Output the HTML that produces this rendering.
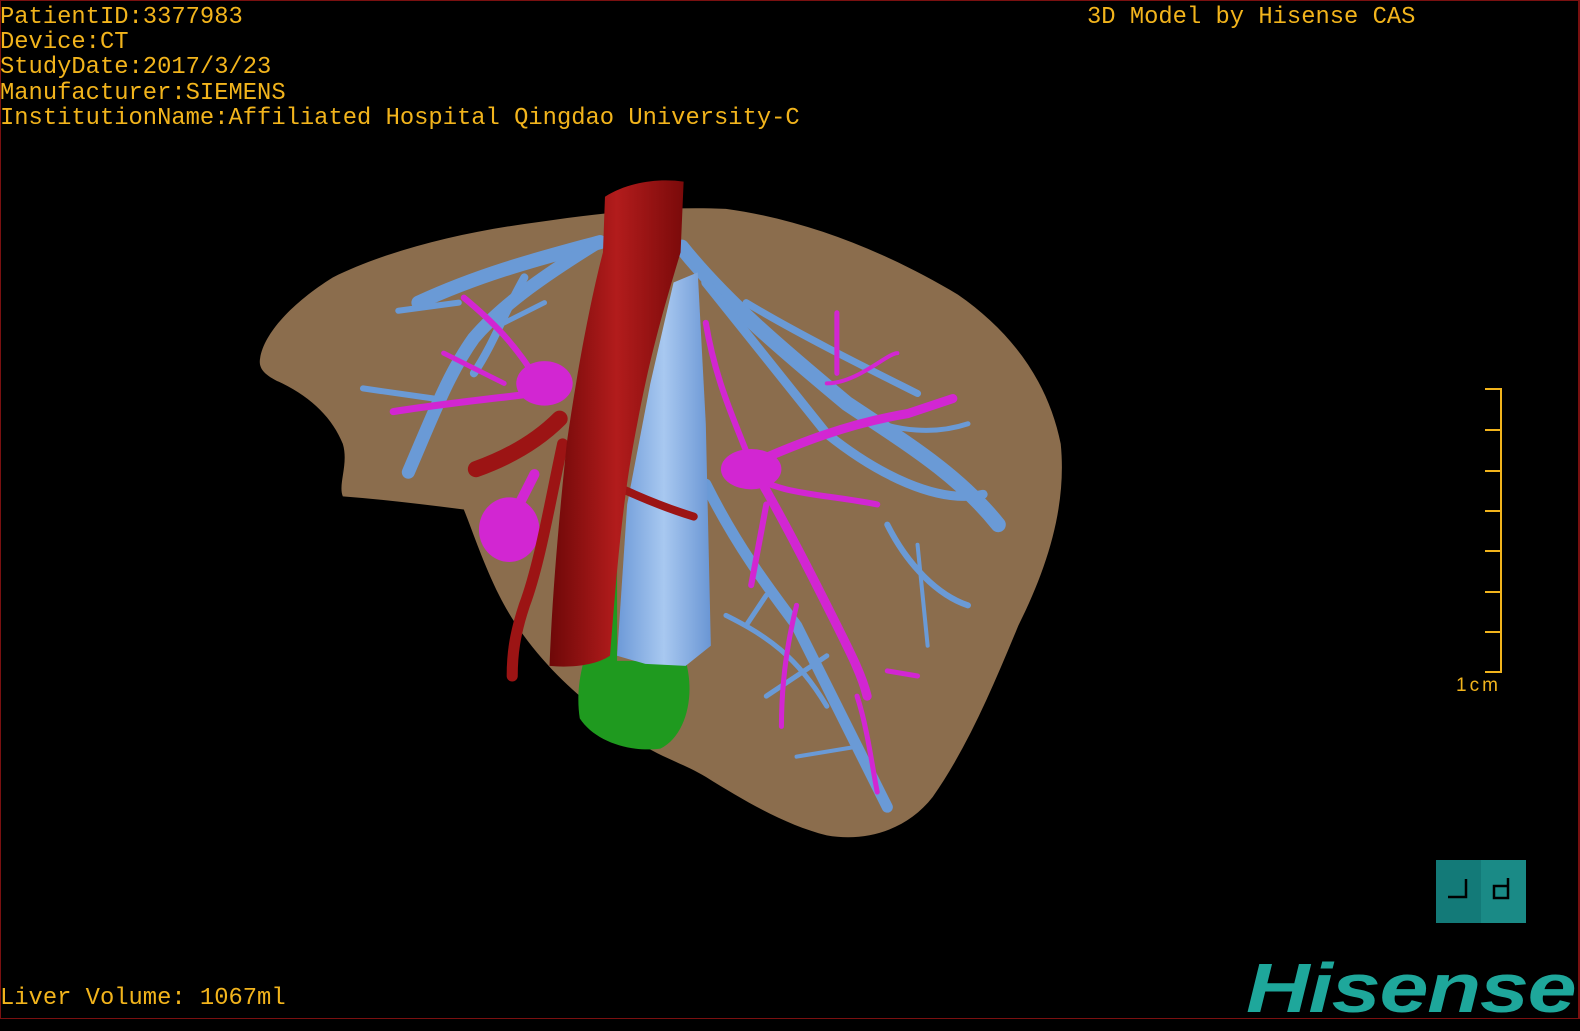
<!DOCTYPE html>
<html><head><meta charset="utf-8"><style>
html,body{margin:0;padding:0;background:#000;width:1580px;height:1020px;overflow:hidden}
#frame{position:absolute;left:0;top:0;width:1580px;height:1019px;border:1px solid #7a1010;border-right:2px solid #7a1010;box-sizing:border-box}
.t{position:absolute;font-family:"Liberation Mono",monospace;font-size:23.8px;color:#f2b41c;white-space:pre;line-height:25.2px;letter-spacing:0}
svg{position:absolute;left:0;top:0}
</style></head><body>
<svg width="1580" height="1020" viewBox="0 0 1567 1011" preserveAspectRatio="none">
<defs>
<linearGradient id="red" x1="0" x2="1"><stop offset="0" stop-color="#6e0808"/><stop offset=".5" stop-color="#b21c1c"/><stop offset="1" stop-color="#7a0a0a"/></linearGradient>
<linearGradient id="cone" x1="0" x2="1"><stop offset="0" stop-color="#6d9ad8"/><stop offset=".5" stop-color="#a8c8f0"/><stop offset="1" stop-color="#6a96d4"/></linearGradient>
</defs>
<path d="M258,355 C262,330 290,300 330,275 C380,250 450,232 520,222 C590,212 650,204 720,207 C800,218 880,250 950,292 C1005,330 1040,380 1052,440 C1058,500 1040,560 1010,620 C985,680 960,740 925,790 C900,822 860,835 820,828 C780,818 740,795 700,770 C670,752 640,748 600,710 C560,680 520,640 495,590 C480,560 470,530 460,505 C420,500 380,495 340,492 C335,480 346,460 340,440 C330,415 310,395 280,380 C262,372 256,365 258,355 Z" fill="#8b6d4d"/>
<g stroke="#6a9ad6" fill="none" stroke-linecap="round" stroke-linejoin="round">
<path d="M595,240 C540,255 480,270 415,300" stroke-width="14"/>
<path d="M590,242 C545,270 500,300 470,335 C445,370 430,410 405,468" stroke-width="13"/>
<path d="M520,275 C500,310 490,340 470,370" stroke-width="8"/>
<path d="M430,395 L360,385" stroke-width="6"/>
<path d="M455,300 L395,308" stroke-width="6"/>
<path d="M500,320 L540,300" stroke-width="5"/>
<path d="M676,245 C720,300 780,350 840,400 C900,440 950,470 990,520" stroke-width="15"/>
<path d="M700,280 C740,330 780,380 820,430 C870,470 930,500 975,490" stroke-width="9"/>
<path d="M740,300 C790,330 850,360 910,390" stroke-width="7"/>
<path d="M700,480 C730,540 760,580 790,620 C820,680 850,740 880,800" stroke-width="11"/>
<path d="M760,590 L740,620" stroke-width="5"/>
<path d="M820,650 L760,690" stroke-width="5"/>
<path d="M850,740 L790,750" stroke-width="4"/>
<path d="M880,520 C900,560 930,590 960,600" stroke-width="6"/>
<path d="M910,540 L920,640" stroke-width="4"/>
<path d="M850,410 C890,430 930,430 960,420" stroke-width="5"/>
<path d="M720,610 C760,630 790,650 820,700" stroke-width="5"/>
</g>
<g stroke="#d226d2" fill="none" stroke-linecap="round" stroke-linejoin="round">
<path d="M535,380 C510,340 490,320 460,295" stroke-width="6"/>
<path d="M530,390 C490,395 440,400 390,408" stroke-width="7"/>
<path d="M440,350 L500,380" stroke-width="5"/>
<path d="M530,470 C515,500 505,520 490,540" stroke-width="10"/>
<path d="M745,460 C790,440 840,420 900,410 L945,395" stroke-width="9"/>
<path d="M745,460 C730,420 710,380 700,320" stroke-width="6"/>
<path d="M745,460 C780,520 810,580 830,620 C845,650 855,670 860,690" stroke-width="9"/>
<path d="M745,470 C770,490 820,490 870,500" stroke-width="6"/>
<path d="M830,370 L830,310" stroke-width="5"/>
<path d="M820,380 C850,380 880,350 890,350" stroke-width="4"/>
<path d="M790,600 C780,640 775,680 775,720" stroke-width="5"/>
<path d="M850,690 C860,720 865,760 870,785" stroke-width="5"/>
<path d="M880,665 L910,670" stroke-width="5"/>
<path d="M760,500 L745,580" stroke-width="6"/>
</g>
<ellipse cx="540" cy="380" rx="28" ry="22" fill="#d226d2"/>
<ellipse cx="745" cy="465" rx="30" ry="20" fill="#d226d2"/>
<ellipse cx="505" cy="525" rx="30" ry="32" fill="#d226d2"/>
<path d="M612,520 L612,655 L680,655 C690,690 680,730 655,742 C625,746 590,735 575,712 C570,680 578,640 605,600 Z" fill="#1f9a1f"/>
<path d="M668,280 L692,270 L700,420 L705,640 L680,660 L640,658 L612,650 L622,500 L645,380 Z" fill="url(#cone)"/>
<g stroke="#9c1414" fill="none" stroke-linecap="round">
<path d="M555,415 C530,440 500,455 472,465" stroke-width="16"/>
<path d="M558,440 C545,500 535,560 520,600 C510,630 508,650 508,670" stroke-width="11"/>
<path d="M618,485 C640,495 665,505 688,512" stroke-width="8"/>
</g>
<path d="M600,195 C620,182 650,176 678,180 L675,250 C660,300 645,350 632,420 C618,490 612,560 605,650 C590,660 565,662 545,660 C548,580 556,500 562,440 C572,370 585,300 598,250 Z" fill="url(#red)"/>
</svg>
<div id="frame"></div>
<div class="t" style="left:0;top:5px">PatientID:3377983
Device:CT
StudyDate:2017/3/23
Manufacturer:SIEMENS
InstitutionName:Affiliated Hospital Qingdao University-C</div>
<div class="t" style="left:1087px;top:5px">3D Model by Hisense CAS</div>
<div class="t" style="left:0;top:986px">Liver Volume: 1067ml</div>
<div style="position:absolute;left:1500px;top:388px;width:2px;height:285px;background:#f2b41c"></div>
<div style="position:absolute;left:1485px;top:388px;width:16px;height:2px;background:#f2b41c;box-shadow:0 41px 0 #f2b41c,0 82px 0 #f2b41c,0 122px 0 #f2b41c,0 162px 0 #f2b41c,0 203px 0 #f2b41c,0 243px 0 #f2b41c,0 283px 0 #f2b41c"></div>
<div style="position:absolute;left:1456px;top:675px;font-family:'Liberation Sans',sans-serif;font-size:19px;color:#f2b41c;letter-spacing:3px">1cm</div>
<div style="position:absolute;left:1436px;top:860px;width:45px;height:63px;background:#137a78"></div>
<div style="position:absolute;left:1481px;top:860px;width:45px;height:63px;background:#1a8a86"></div>
<svg width="1580" height="1020" style="pointer-events:none"><g stroke="#000" stroke-width="2.5" fill="none"><path d="M1448,897 H1466 V879"/><path d="M1508,878 V898 H1494 V886 H1508"/></g></svg>
<div style="position:absolute;left:1246px;top:945px;font-family:'Liberation Sans',sans-serif;font-weight:bold;font-style:italic;font-size:70px;color:#1ea79b;letter-spacing:-1px;transform:scaleX(1.26);transform-origin:left top;line-height:86px">Hisense</div>
</body></html>
